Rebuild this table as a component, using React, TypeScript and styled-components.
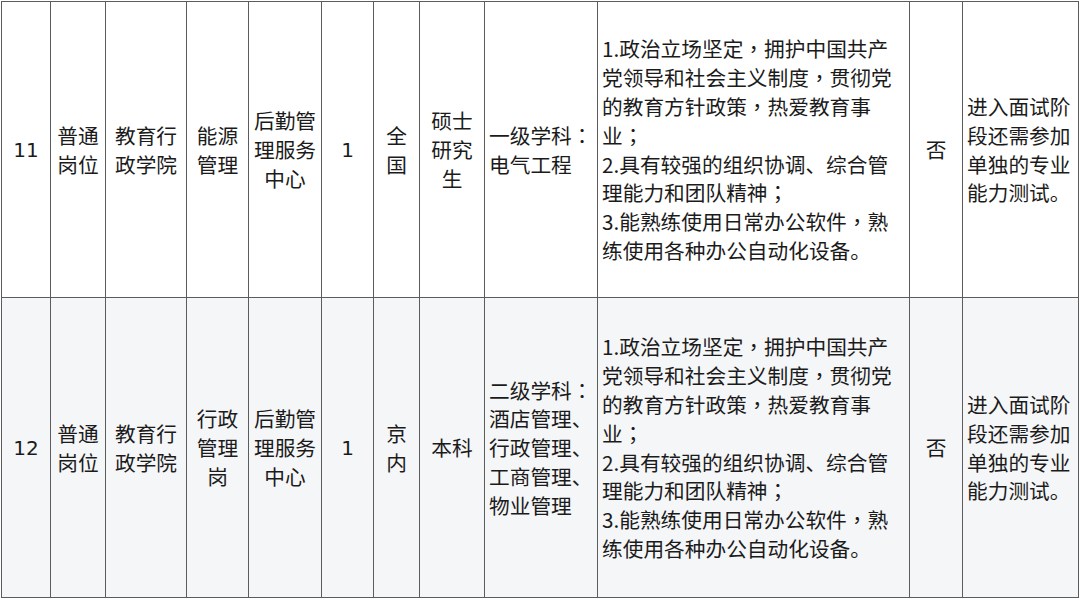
import React from 'react';
import styled, { createGlobalStyle } from 'styled-components';

const GlobalStyle = createGlobalStyle`
  html, body {
    margin: 0;
    padding: 0;
    background: #ffffff;
  }
  body {
    font-family: "Noto Sans CJK SC", "Noto Sans", sans-serif;
    color: #1b1b1b;
  }
`;

const Page = styled.div`
  padding: 1px 0 0 1px;
  width: 1080px;
  box-sizing: border-box;
`;

const Table = styled.table`
  border-collapse: collapse;
  table-layout: fixed;
  width: 1077px;
`;

const Row = styled.tr<{ $shaded?: boolean; $height: number }>`
  height: ${(p) => p.$height}px;
  background: ${(p) => (p.$shaded ? '#f5f6f8' : '#ffffff')};
`;

const Cell = styled.td<{ $align?: 'left' | 'center' }>`
  border: 1.5px solid #5c5c5c;
  padding: 0 0 0 ${(p) => (p.$align === 'left' ? '4px' : '0')};
  text-align: ${(p) => p.$align || 'center'};
  vertical-align: middle;
  font-size: 20.7px;
  line-height: 28.8px;
  box-sizing: border-box;
`;

const Line = styled.div`
  white-space: nowrap;
`;

// full-width comma / colon / semicolon sit centred in their box in the original
const Punct = styled.span`
  font-family: "Noto Sans CJK TC", "Noto Sans CJK SC", sans-serif;
`;

const Num = styled.span`
  font-family: "DejaVu Sans", "Noto Sans CJK SC", sans-serif;
  font-size: 20px;
`;

const widths = [49, 55, 81, 62, 73, 52, 46, 65, 113, 312, 53, 116];

const requirements = [
  '1.政治立场坚定，拥护中国共产',
  '党领导和社会主义制度，贯彻党',
  '的教育方针政策，热爱教育事',
  '业；',
  '2.具有较强的组织协调、综合管',
  '理能力和团队精神；',
  '3.能熟练使用日常办公软件，熟',
  '练使用各种办公自动化设备。',
];

interface RowData {
  id: string;
  type: string[];
  unit: string[];
  post: string[];
  dept: string[];
  count: string;
  scope: string[];
  degree: string[];
  major: string[];
  note: string[];
}

const rows: RowData[] = [
  {
    id: '11',
    type: ['普通', '岗位'],
    unit: ['教育行', '政学院'],
    post: ['能源', '管理'],
    dept: ['后勤管', '理服务', '中心'],
    count: '1',
    scope: ['全', '国'],
    degree: ['硕士', '研究', '生'],
    major: ['一级学科：', '电气工程'],
    note: ['进入面试阶', '段还需参加', '单独的专业', '能力测试。'],
  },
  {
    id: '12',
    type: ['普通', '岗位'],
    unit: ['教育行', '政学院'],
    post: ['行政', '管理', '岗'],
    dept: ['后勤管', '理服务', '中心'],
    count: '1',
    scope: ['京', '内'],
    degree: ['本科'],
    major: ['二级学科：', '酒店管理、', '行政管理、', '工商管理、', '物业管理'],
    note: ['进入面试阶', '段还需参加', '单独的专业', '能力测试。'],
  },
];

const renderText = (t: string) =>
  t.split(/([，：；])/).map((part, i) =>
    /^[，：；]$/.test(part) ? <Punct key={i}>{part}</Punct> : part
  );

const Lines: React.FC<{ items: string[] }> = ({ items }) => (
  <>
    {items.map((t, i) => (
      <Line key={i}>{renderText(t)}</Line>
    ))}
  </>
);

const App: React.FC = () => {
  return (
    <Page>
      <GlobalStyle />
      <Table>
        <colgroup>
          {widths.map((w, i) => (
            <col key={i} style={{ width: w }} />
          ))}
        </colgroup>
        <tbody>
          {rows.map((r, i) => (
            <Row key={r.id} $shaded={i % 2 === 1} $height={i === 0 ? 296 : 300}>
              <Cell><Num>{r.id}</Num></Cell>
              <Cell><Lines items={r.type} /></Cell>
              <Cell><Lines items={r.unit} /></Cell>
              <Cell><Lines items={r.post} /></Cell>
              <Cell><Lines items={r.dept} /></Cell>
              <Cell><Num>{r.count}</Num></Cell>
              <Cell><Lines items={r.scope} /></Cell>
              <Cell><Lines items={r.degree} /></Cell>
              <Cell $align="left"><Lines items={r.major} /></Cell>
              <Cell $align="left"><Lines items={requirements} /></Cell>
              <Cell>否</Cell>
              <Cell $align="left"><Lines items={r.note} /></Cell>
            </Row>
          ))}
        </tbody>
      </Table>
    </Page>
  );
};

export default App;
